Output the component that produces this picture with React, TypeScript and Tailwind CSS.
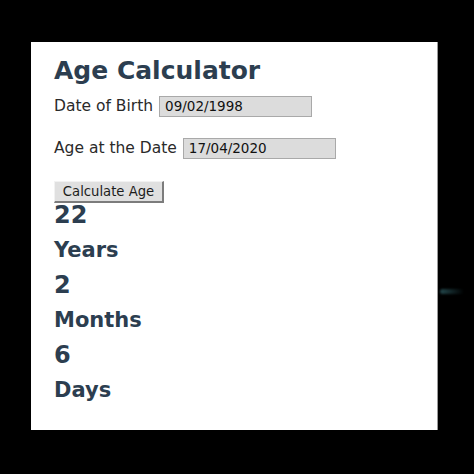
import React from "react";

export default function App() {
  const heading = "font-['DejaVu_Sans',sans-serif] font-bold text-[#2c3e50]";
  const label = "font-['DejaVu_Sans',sans-serif] text-[15.5px] leading-[21px] text-[#2a2a2a] whitespace-nowrap";
  const input =
    "h-[21px] w-[153px] bg-[#dcdcdc] border border-[#a9a9a9] pl-[5px] font-['DejaVu_Sans',sans-serif] text-[13.5px] leading-[19px] text-[#111111] flex items-center";
  return (
    <div className="w-[474px] h-[474px] bg-black relative overflow-hidden">
      <div className="absolute left-[440px] top-[289px] w-[24px] h-[5px] rounded-full bg-gradient-to-r from-[#2d5a60] to-transparent blur-[1px] opacity-80" />
      <div className="pt-[42px] pl-[31px]">
        <div className="w-[407px] h-[388px] bg-white border-r border-[#9a9a9a] pl-[23px] pt-[16px] flex flex-col">
          <h1 className={`${heading} text-[25px] leading-[25px]`}>Age Calculator</h1>
          <div className="mt-[13px] flex items-center gap-[6px]">
            <span className={label}>Date of Birth</span>
            <div className={input}>09/02/1998</div>
          </div>
          <div className="mt-[21px] flex items-center gap-[6px]">
            <span className={label}>Age at the Date</span>
            <div className={input}>17/04/2020</div>
          </div>
          <div className="mt-[22px]">
            <button className="h-[22px] w-[110px] bg-[#e0e0e0] border-t border-l border-t-[#f2f2f2] border-l-[#f2f2f2] border-r-2 border-b-2 border-r-[#7c7c7c] border-b-[#7c7c7c] font-['DejaVu_Sans',sans-serif] text-[13.2px] leading-[18px] text-[#1c1c1c] flex items-center justify-center">
              Calculate Age
            </button>
          </div>
          <div className="flex flex-col gap-[12.5px]">
            <div className={`${heading} text-[24px] leading-[24px]`}>22</div>
            <div className={`${heading} text-[21px] leading-[21px]`}>Years</div>
            <div className={`${heading} text-[24px] leading-[24px]`}>2</div>
            <div className={`${heading} text-[21px] leading-[21px]`}>Months</div>
            <div className={`${heading} text-[24px] leading-[24px]`}>6</div>
            <div className={`${heading} text-[21px] leading-[21px]`}>Days</div>
          </div>
        </div>
      </div>
    </div>
  );
}
